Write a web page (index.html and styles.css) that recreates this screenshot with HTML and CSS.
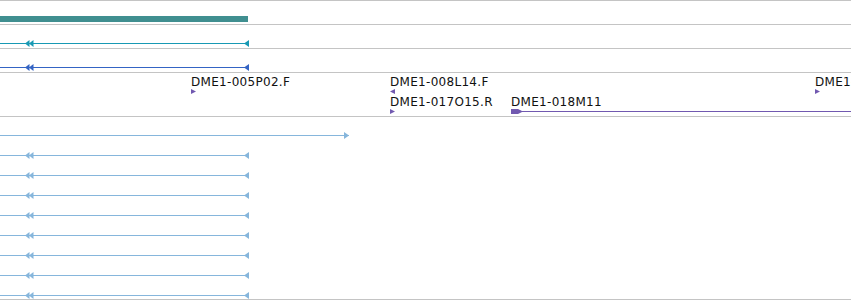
FILE: index.html
```html
<!DOCTYPE html>
<html lang="en">
<head>
    <meta charset="UTF-8">
    <title>Track view</title>
    <link rel="stylesheet" href="styles.css">
</head>
<body>
    <div class="view">
        <!-- coverage bar -->
        <div class="track track-small">
            <div class="bar" style="left:0;width:248px"></div>
        </div>

        <!-- gene models -->
        <div class="track track-small">
            <div class="feature gene" style="left:0;width:249px">
                <svg class="mark-double" width="9" height="7" viewBox="0 0 9 7"><polygon points="0,3.5 4.5,0 4.5,7"/><polygon points="4,3.5 8.5,0 8.5,7"/></svg>
                <svg class="mark-end" width="5" height="7" viewBox="0 0 5 7"><polygon points="0,3.5 5,0 5,7"/></svg>
            </div>
        </div>
        <div class="track track-small">
            <div class="feature mrna" style="left:0;width:249px">
                <svg class="mark-double" width="9" height="7" viewBox="0 0 9 7"><polygon points="0,3.5 4.5,0 4.5,7"/><polygon points="4,3.5 8.5,0 8.5,7"/></svg>
                <svg class="mark-end" width="5" height="7" viewBox="0 0 5 7"><polygon points="0,3.5 5,0 5,7"/></svg>
            </div>
        </div>

        <!-- clone ends -->
        <div class="track track-clones">
            <div class="clone" style="left:191px;top:2px">
                <span class="label">DME1-005P02.F</span>
                <svg class="tick" width="5" height="5" viewBox="0 0 5 5"><polygon points="0,0 5,2.5 0,5"/></svg>
            </div>
            <div class="clone" style="left:390px;top:2px">
                <span class="label">DME1-008L14.F</span>
                <svg class="tick" width="5" height="5" viewBox="0 0 5 5"><polygon points="5,0 0,2.5 5,5"/></svg>
            </div>
            <div class="clone" style="left:390px;top:22px">
                <span class="label">DME1-017O15.R</span>
                <svg class="tick" width="5" height="5" viewBox="0 0 5 5"><polygon points="0,0 5,2.5 0,5"/></svg>
            </div>
            <div class="clone" style="left:511px;top:22px;right:0">
                <span class="label">DME1-018M11</span>
                <div class="clone-span">
                    <svg class="clone-head" width="12" height="5" viewBox="0 0 12 5"><polygon points="0,0 7,0 12,2.5 7,5 0,5"/></svg>
                </div>
            </div>
            <div class="clone" style="left:815px;top:2px">
                <span class="label">DME1-</span>
                <svg class="tick" width="5" height="5" viewBox="0 0 5 5"><polygon points="0,0 5,2.5 0,5"/></svg>
            </div>
        </div>

        <!-- transcripts -->
        <div class="track track-reads">
            <div class="read-row">
                <div class="feature read" style="left:0;width:349px">
                    <svg class="mark-end" width="5" height="7" viewBox="0 0 5 7"><polygon points="0,0 5,3.5 0,7"/></svg>
                </div>
            </div>
            <div class="read-row">
                <div class="feature read" style="left:0;width:249px">
                    <svg class="mark-double" width="9" height="7" viewBox="0 0 9 7"><polygon points="0,3.5 4.5,0 4.5,7"/><polygon points="4,3.5 8.5,0 8.5,7"/></svg>
                    <svg class="mark-end" width="5" height="7" viewBox="0 0 5 7"><polygon points="0,3.5 5,0 5,7"/></svg>
                </div>
            </div>
            <div class="read-row">
                <div class="feature read" style="left:0;width:249px">
                    <svg class="mark-double" width="9" height="7" viewBox="0 0 9 7"><polygon points="0,3.5 4.5,0 4.5,7"/><polygon points="4,3.5 8.5,0 8.5,7"/></svg>
                    <svg class="mark-end" width="5" height="7" viewBox="0 0 5 7"><polygon points="0,3.5 5,0 5,7"/></svg>
                </div>
            </div>
            <div class="read-row">
                <div class="feature read" style="left:0;width:249px">
                    <svg class="mark-double" width="9" height="7" viewBox="0 0 9 7"><polygon points="0,3.5 4.5,0 4.5,7"/><polygon points="4,3.5 8.5,0 8.5,7"/></svg>
                    <svg class="mark-end" width="5" height="7" viewBox="0 0 5 7"><polygon points="0,3.5 5,0 5,7"/></svg>
                </div>
            </div>
            <div class="read-row">
                <div class="feature read" style="left:0;width:249px">
                    <svg class="mark-double" width="9" height="7" viewBox="0 0 9 7"><polygon points="0,3.5 4.5,0 4.5,7"/><polygon points="4,3.5 8.5,0 8.5,7"/></svg>
                    <svg class="mark-end" width="5" height="7" viewBox="0 0 5 7"><polygon points="0,3.5 5,0 5,7"/></svg>
                </div>
            </div>
            <div class="read-row">
                <div class="feature read" style="left:0;width:249px">
                    <svg class="mark-double" width="9" height="7" viewBox="0 0 9 7"><polygon points="0,3.5 4.5,0 4.5,7"/><polygon points="4,3.5 8.5,0 8.5,7"/></svg>
                    <svg class="mark-end" width="5" height="7" viewBox="0 0 5 7"><polygon points="0,3.5 5,0 5,7"/></svg>
                </div>
            </div>
            <div class="read-row">
                <div class="feature read" style="left:0;width:249px">
                    <svg class="mark-double" width="9" height="7" viewBox="0 0 9 7"><polygon points="0,3.5 4.5,0 4.5,7"/><polygon points="4,3.5 8.5,0 8.5,7"/></svg>
                    <svg class="mark-end" width="5" height="7" viewBox="0 0 5 7"><polygon points="0,3.5 5,0 5,7"/></svg>
                </div>
            </div>
            <div class="read-row">
                <div class="feature read" style="left:0;width:249px">
                    <svg class="mark-double" width="9" height="7" viewBox="0 0 9 7"><polygon points="0,3.5 4.5,0 4.5,7"/><polygon points="4,3.5 8.5,0 8.5,7"/></svg>
                    <svg class="mark-end" width="5" height="7" viewBox="0 0 5 7"><polygon points="0,3.5 5,0 5,7"/></svg>
                </div>
            </div>
            <div class="read-row">
                <div class="feature read" style="left:0;width:249px">
                    <svg class="mark-double" width="9" height="7" viewBox="0 0 9 7"><polygon points="0,3.5 4.5,0 4.5,7"/><polygon points="4,3.5 8.5,0 8.5,7"/></svg>
                    <svg class="mark-end" width="5" height="7" viewBox="0 0 5 7"><polygon points="0,3.5 5,0 5,7"/></svg>
                </div>
            </div>
        </div>
    </div>
</body>
</html>
```

FILE: styles.css
```css
/* reset */
* {
    margin: 0;
    padding: 0;
    box-sizing: border-box;
}

body {
    font-family: "DejaVu Sans", sans-serif;
    background: #fff;
    color: #000;
    width: 851px;
    height: 300px;
    overflow: hidden;
}

/* track stack */
.view {
    width: 851px;
    border-top: 1px solid #c4c4c4;
    overflow: hidden;
}

.track {
    position: relative;
    border-bottom: 1px solid #c4c4c4;
    overflow: hidden;
}

.track-small {
    height: 24px;
}

.track-clones {
    height: 44px;
}

.track-reads {
    height: 183px;
    padding-top: 8px;
}

/* coverage bar */
.bar {
    position: absolute;
    top: 15px;
    height: 6px;
    background: #408f90;
}

/* line features with strand marks */
.feature {
    position: absolute;
    top: 15px;
    height: 7px;
}

.feature::before {
    content: "";
    position: absolute;
    left: 0;
    right: 0;
    top: 3px;
    height: 1px;
    background: currentColor;
}

.feature svg {
    position: absolute;
    top: 0;
    fill: currentColor;
}

.mark-double {
    left: 25px;
}

.mark-end {
    right: 0;
}

.gene {
    color: #1899b4;
}

.mrna {
    color: #3464c4;
}

.read {
    color: #86b6dc;
}

/* clone ends */
.clone {
    position: absolute;
    color: #7159b0;
}

.clone .label {
    display: block;
    font-size: 12px;
    line-height: 14px;
    letter-spacing: 0.3px;
    color: #111;
    white-space: nowrap;
}

.clone .tick {
    display: block;
    fill: currentColor;
}

.clone-span {
    position: relative;
    height: 5px;
}

.clone-span::before {
    content: "";
    position: absolute;
    left: 0;
    right: 0;
    top: 2px;
    height: 1px;
    background: currentColor;
}

.clone-head {
    position: absolute;
    left: 0;
    top: 0;
    fill: currentColor;
}

/* transcript rows */
.read-row {
    position: relative;
    height: 20px;
}

.read-row .feature {
    top: 7px;
}
```
